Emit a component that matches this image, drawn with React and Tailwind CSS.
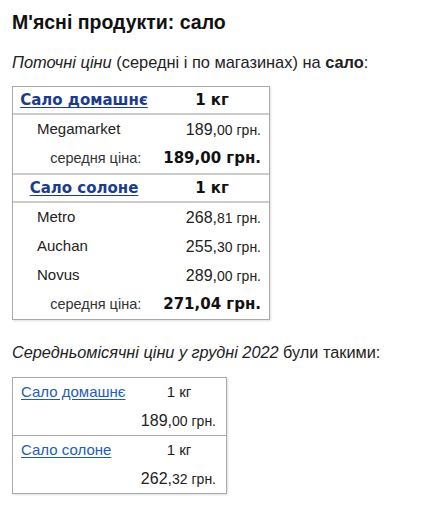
import React from "react";

const sans = { fontFamily: '"Liberation Sans", Arial, sans-serif' };

// price with smaller kopecks, e.g. 189,00 грн.
function Price({ value, bold }) {
  const [uah, kop] = value.split(",");
  if (bold) {
    return (
      <span className="font-['DejaVu_Sans',Verdana,sans-serif] font-bold text-[15px] text-[#111]">
        {uah},{kop} грн.
      </span>
    );
  }
  return (
    <span className="text-[16px] text-[#222]">
      {uah},<span className="text-[14px]">{kop} грн.</span>
    </span>
  );
}

const current = [
  {
    name: "Сало домашнє",
    shops: [{ shop: "Megamarket", price: "189,00" }],
    avg: "189,00",
  },
  {
    name: "Сало солоне",
    shops: [
      { shop: "Metro", price: "268,81" },
      { shop: "Auchan", price: "255,30" },
      { shop: "Novus", price: "289,00" },
    ],
    avg: "271,04",
  },
];

const monthly = [
  { name: "Сало домашнє", price: "189,00" },
  { name: "Сало солоне", price: "262,32" },
];

export default function App() {
  return (
    <div className="bg-white min-h-[507px] px-3 pt-[11px] text-[#222]" style={sans}>
      <h1 className="text-[19.5px] font-bold leading-[22px] text-[#111]">М'ясні продукти: сало</h1>

      <p className="mt-[19px] text-[16.4px] leading-[20px]">
        <i>Поточні ціни</i> (середні і по магазинах) на <b>сало</b>:
      </p>

      {/* current prices */}
      <div className="mt-[14px] w-[258px] border border-[#aaa] shadow-[1px_1px_2px_rgba(0,0,0,0.12)]">
        {current.map((g, gi) => (
          <div key={gi} className={gi > 0 ? "border-t-2 border-[#ccc]" : ""}>
            <div className="flex h-[28px] items-center border-b-2 border-[#ccc] font-['DejaVu_Sans',Verdana,sans-serif] text-[15px] font-bold">
              <div className="w-[142px] text-center">
                <a href="#" className="text-[#1d3c8c] underline underline-offset-2">{g.name}</a>
              </div>
              <div className="flex-1 text-center text-[#111]">1 кг</div>
            </div>
            {g.shops.map((s, si) => (
              <div key={si} className="flex h-[29px] items-center pl-6 pr-2">
                <span className="flex-1 text-[15px]">{s.shop}</span>
                <Price value={s.price} />
              </div>
            ))}
            <div className="flex h-[29px] items-center justify-end pr-2">
              <span className="text-[14.5px] text-[#333] mr-[22px]">середня ціна:</span>
              <Price value={g.avg} bold />
            </div>
          </div>
        ))}
      </div>

      <p className="mt-[22px] text-[16.3px] leading-[20px]">
        <i>Середньомісячні ціни у грудні 2022</i> були такими:
      </p>

      {/* monthly average */}
      <div className="mt-[15px] w-[215px] border border-[#aaa] shadow-[1px_1px_2px_rgba(0,0,0,0.12)]">
        {monthly.map((m, mi) => (
          <div key={mi} className={"pl-2 pr-[10px] " + (mi > 0 ? "border-t border-[#aaa]" : "")}>
            <div className="flex h-[29px] items-center">
              <a href="#" className="w-[121px] text-[15px] text-[#1f5cb8] underline underline-offset-2">{m.name}</a>
              <span className="flex-1 text-center text-[15px]">1 кг</span>
            </div>
            <div className="flex h-[28px] items-center justify-end">
              <Price value={m.price} />
            </div>
          </div>
        ))}
      </div>
    </div>
  );
}
